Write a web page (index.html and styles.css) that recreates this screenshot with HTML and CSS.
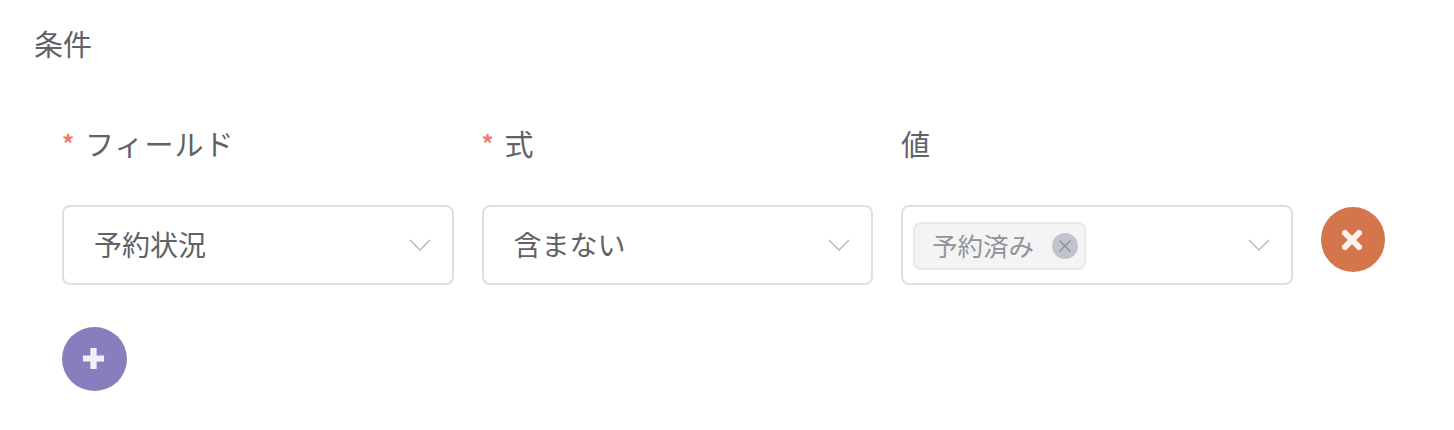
FILE: index.html
```html
<!DOCTYPE html>
<html lang="ja">
<head>
    <meta charset="UTF-8">
    <title>条件</title>
    <link rel="stylesheet" href="styles.css">
</head>
<body>
    <h2 class="title">条件</h2>
    <div class="form">
        <!-- ラベル -->
        <div class="row labels">
            <label class="label required wide">フィールド</label>
            <label class="label required">式</label>
            <label class="label">値</label>
        </div>
        <!-- 条件の行 -->
        <div class="row">
            <div class="select">
                <span class="value">予約状況</span>
                <svg class="arrow" viewBox="0 0 22 12"><path d="M1 1 L11 11 L21 1"/></svg>
            </div>
            <div class="select">
                <span class="value">含まない</span>
                <svg class="arrow" viewBox="0 0 22 12"><path d="M1 1 L11 11 L21 1"/></svg>
            </div>
            <div class="select multi">
                <span class="tag">
                    <span class="tag-text">予約済み</span>
                    <span class="tag-close">
                        <svg viewBox="0 0 14 14"><path d="M1.5 1.5 L12.5 12.5 M12.5 1.5 L1.5 12.5"/></svg>
                    </span>
                </span>
                <svg class="arrow" viewBox="0 0 22 12"><path d="M1 1 L11 11 L21 1"/></svg>
            </div>
            <button class="round remove">
                <svg viewBox="0 0 20 20"><path d="M3 3 L17 17 M17 3 L3 17"/></svg>
            </button>
        </div>
        <button class="round add">
            <svg viewBox="0 0 24 24"><path d="M12 1 L12 23 M1 12 L23 12"/></svg>
        </button>
    </div>
</body>
</html>
```

FILE: styles.css
```css
:root{
    --text-color: #606266;
    --border-color: #dcdfe6;
    --muted-color: #909399;
}
body {
    margin: 0;
    background-color: #ffffff;
    color: var(--text-color);
    font-family: "Noto Sans CJK JP", "Noto Sans", sans-serif;
    font-weight: 400;
}
.title{
    margin: 0;
    padding: 23px 0 0 34px;
    font-size: 29px;
    line-height: 40px;
    font-weight: 400;
}
.form{
    padding: 61px 0 0 62px;
}
.row{
    display: flex;
    align-items: center;
    gap: 28px;
}
.labels{
    height: 40px;
    margin-bottom: 41px;
}
.label{
    width: 391.5px;
    font-size: 29px;
    line-height: 38px;
    height: 40px;
}
.wide{
    letter-spacing: 1px;
}
.required::before{
    content: "*";
    display: inline-block;
    width: 23px;
    color: #ee7b76;
    font-size: 24px;
    font-weight: 700;
    line-height: 28px;
    vertical-align: 3px;
}
.select{
    width: 391.5px;
    height: 80px;
    box-sizing: border-box;
    display: flex;
    align-items: center;
    justify-content: space-between;
    padding: 0 21px 0 30px;
    border: 2px solid var(--border-color);
    border-radius: 8px;
    font-size: 28px;
}
.value{
    margin-top: -2px;
}
.multi{
    padding-left: 10px;
}
.arrow{
    width: 22px;
    height: 12px;
    fill: none;
    stroke: #b9bdc6;
    stroke-width: 1.6;
}
.tag{
    display: flex;
    align-items: center;
    height: 48px;
    margin-top: 2px;
    box-sizing: border-box;
    padding: 0 6px 0 17px;
    background-color: #f4f4f5;
    border: 2px solid #e9e9eb;
    border-radius: 8px;
    color: var(--muted-color);
    font-size: 25.5px;
}
.tag-text{
    margin-top: -3px;
}
.tag-close{
    display: flex;
    align-items: center;
    justify-content: center;
    width: 26px;
    height: 26px;
    margin-left: 18px;
    border-radius: 50%;
    background-color: #c0c4cc;
}
.tag-close svg{
    width: 14px;
    height: 14px;
    fill: none;
    stroke: #8a8d94;
    stroke-width: 1.3;
}
.round{
    display: flex;
    align-items: center;
    justify-content: center;
    width: 65px;
    height: 65px;
    padding: 0;
    border: 0;
    border-radius: 50%;
}
.round svg{
    fill: none;
    stroke-linecap: round;
}
.remove{
    align-self: flex-start;
    width: 64px;
    margin-top: 2px;
    background-color: #d4754b;
}
.remove svg{
    width: 20px;
    height: 20px;
    margin-left: -1px;
    stroke: #fcf1ec;
    stroke-width: 6;
    stroke-linecap: square;
}
.add{
    margin-top: 42px;
    height: 64px;
    background-color: #8a7dbe;
}
.add svg{
    width: 23px;
    height: 23px;
    margin: -2px 0 0 -3px;
    stroke: #f2f0f8;
    stroke-width: 6.5;
    stroke-linecap: butt;
}
```
